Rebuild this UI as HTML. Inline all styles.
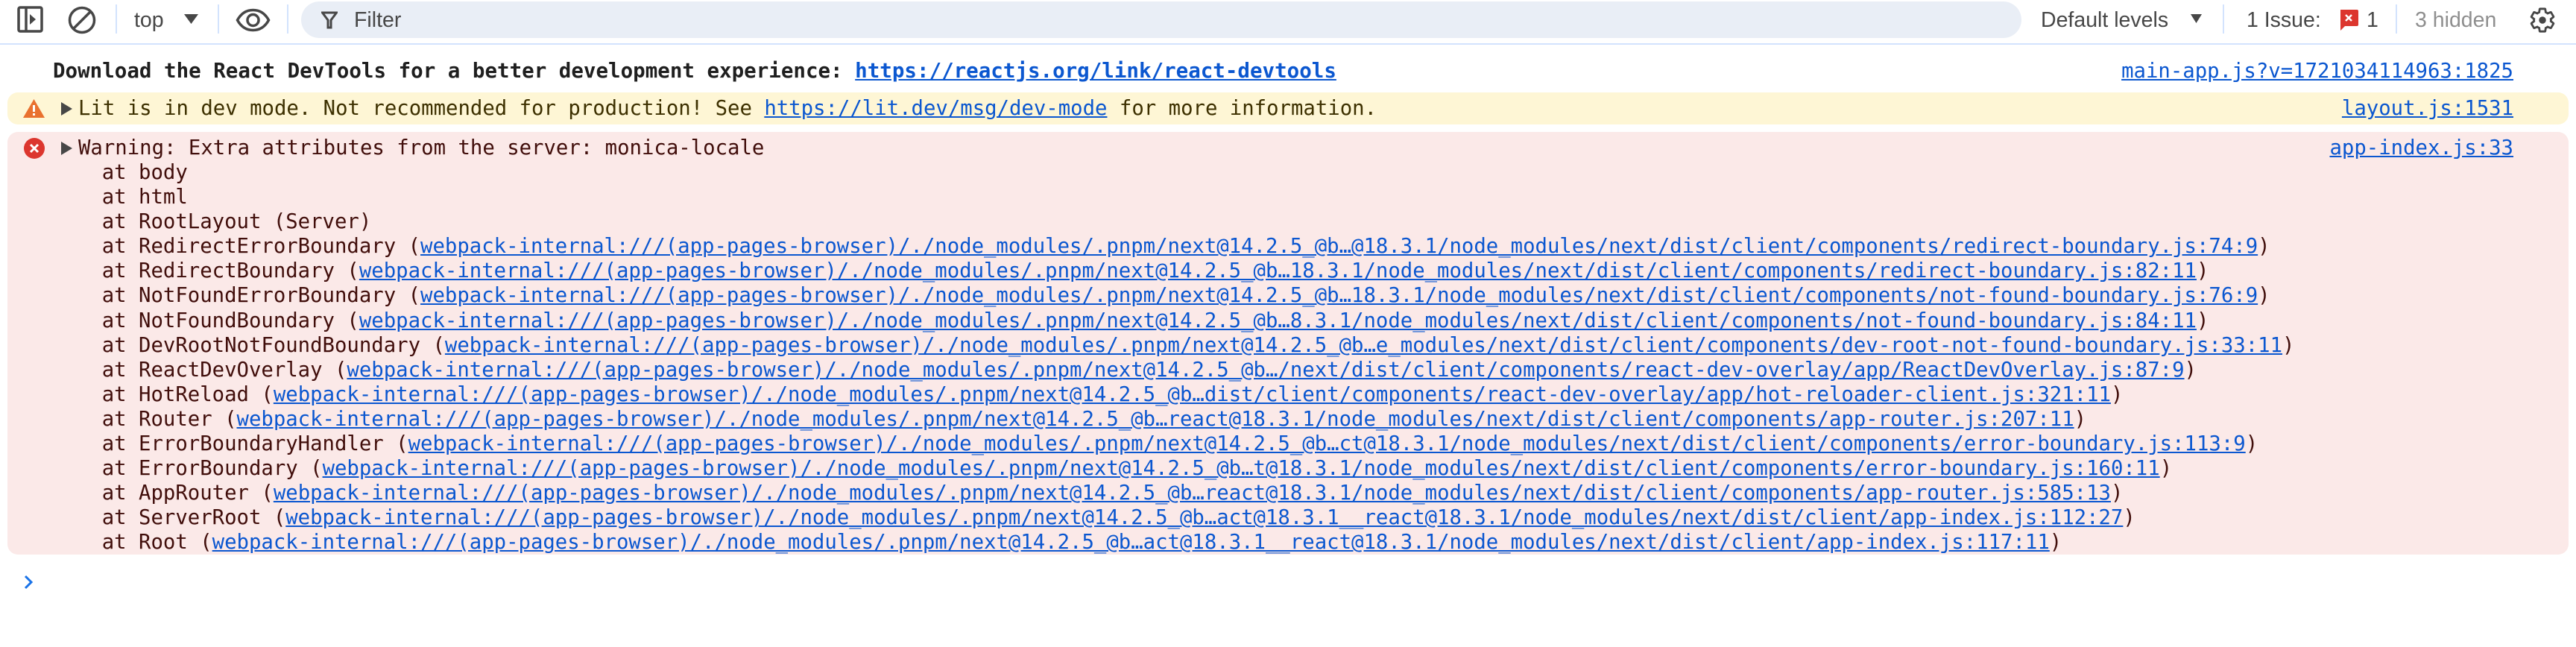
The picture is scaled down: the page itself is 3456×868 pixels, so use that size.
<!DOCTYPE html>
<html><head><meta charset="utf-8"><style>
*{margin:0;padding:0;box-sizing:border-box}
body{width:3456px;height:868px;background:#fff;position:relative;overflow:hidden;font-family:"Liberation Sans",sans-serif}
.tb{position:absolute;left:0;top:0;width:3456px;height:60px;border-bottom:2px solid #d3e3fd}
.sep{position:absolute;top:6px;width:2px;height:39px;background:#d3e3fd}
.t{position:absolute;font-size:28.5px;color:#474747;top:11px;line-height:32px}
.mono{font-family:"DejaVu Sans Mono","Liberation Mono",monospace;font-size:27.3px;line-height:33px;white-space:pre;position:absolute}
a{color:#0b57d0;text-decoration:underline}
.band{position:absolute;left:10px;width:3436px;border-radius:14px}
.err{color:#410e0b}
.ln{left:71px}
</style></head><body>
<div class="tb">
<svg style="position:absolute;left:23px;top:8px" width="35" height="36" viewBox="0 0 35 36"><rect x="2" y="2" width="31" height="32" rx="2" fill="none" stroke="#474747" stroke-width="3.5"/><line x1="12" y1="2" x2="12" y2="34" stroke="#474747" stroke-width="3.5"/><path d="M17 11 L25 18 L17 25Z" fill="#474747"/></svg>
<svg style="position:absolute;left:91px;top:8px" width="38" height="38" viewBox="0 0 38 38"><circle cx="19" cy="19" r="16.5" fill="none" stroke="#474747" stroke-width="3.5"/><line x1="8" y1="30" x2="30" y2="8" stroke="#474747" stroke-width="3.5"/></svg>
<div class="sep" style="left:155px"></div>
<div class="t" style="left:180px">top</div>
<svg style="position:absolute;left:247px;top:19px" width="19" height="13"><path d="M0 0H19L9.5 13Z" fill="#474747"/></svg>
<div class="sep" style="left:292px"></div>
<svg style="position:absolute;left:316px;top:11px" width="47" height="32" viewBox="0 0 47 32"><path d="M2.5 16C8 6 15 2.5 23.5 2.5S39 6 44.5 16C39 26 32 29.5 23.5 29.5S8 26 2.5 16Z" fill="none" stroke="#474747" stroke-width="3.5"/><circle cx="23.5" cy="16" r="7.5" fill="none" stroke="#474747" stroke-width="3.5"/></svg>
<div class="sep" style="left:385px"></div>
<div style="position:absolute;left:404px;top:2px;width:2308px;height:49px;border-radius:25px;background:#e9eef6"></div>
<svg style="position:absolute;left:431px;top:15px" width="22" height="24" viewBox="0 0 22 24"><path d="M1.5 2H20.5L13 12V22H9V12Z" fill="none" stroke="#474747" stroke-width="3"/></svg>
<div class="t" style="left:475px;color:#474747">Filter</div>
<div class="t" style="left:2738px">Default levels</div>
<svg style="position:absolute;left:2939px;top:19px" width="15" height="12"><path d="M0 0H15L7.5 12Z" fill="#474747"/></svg>
<div class="sep" style="left:2982px"></div>
<div class="t" style="left:3014px">1 Issue:</div>
<svg style="position:absolute;left:3138px;top:13px" width="26" height="28" viewBox="0 0 26 28"><path d="M2 0H24a2 2 0 0 1 2 2V20a2 2 0 0 1-2 2H8L2 28Z" fill="#dc362e"/><path d="M9 7L17 15M17 7L9 15" stroke="#fff" stroke-width="2.5"/></svg>
<div class="t" style="left:3175px">1</div>
<div class="sep" style="left:3214px"></div>
<div class="t" style="left:3240px;color:#8f8f8f">3 hidden</div>
<svg style="position:absolute;left:3392px;top:8px" width="38" height="38" viewBox="0 0 24 24"><path d="M19.14 12.94c.04-.3.06-.61.06-.94 0-.32-.02-.64-.07-.94l2.03-1.58a.49.49 0 0 0 .12-.61l-1.92-3.32a.488.488 0 0 0-.59-.22l-2.39.96c-.5-.38-1.030-.7-1.62-.94l-.36-2.54a.484.484 0 0 0-.48-.41h-3.840c-.24 0-.43.17-.47.41l-.36 2.54c-.59.24-1.13.57-1.62.94l-2.39-.96c-.22-.08-.47 0-.59.22L2.74 8.87c-.12.21-.08.47.12.61l2.03 1.58c-.05.3-.09.63-.09.94s.02.64.07.94l-2.03 1.58a.49.49 0 0 0-.12.61l1.920 3.32c.12.22.37.29.59.22l2.39-.96c.5.38 1.03.7 1.62.94l.36 2.54c.05.24.24.41.48.41h3.84c.24 0 .44-.17.47-.41l.36-2.54c.59-.24 1.13-.56 1.62-.94l2.39.96c.22.08.47 0 .59-.22l1.92-3.32c.12-.22.07-.47-.12-.61l-2.01-1.58z" fill="none" stroke="#474747" stroke-width="1.8"/><circle cx="12" cy="12" r="3" fill="#474747"/></svg>
</div>

<div class="mono ln" style="top:79px;font-weight:bold;color:#1f1f1f;font-size:27.5px">Download the React DevTools for a better development experience: <a>https://reactjs.org/link/react-devtools</a></div>
<div class="mono" style="top:79px;right:84px"><a>main-app.js?v=1721034114963:1825</a></div>

<div class="band" style="top:124px;height:43px;background:#fef6d5"></div>
<svg style="position:absolute;left:30px;top:132px" width="31" height="27" viewBox="0 0 31 27"><path d="M15.5 1L30 26H1Z" fill="#e9712f"/><rect x="14" y="9" width="3" height="9" fill="#fff"/><rect x="14" y="20" width="3" height="3" fill="#fff"/></svg>
<svg style="position:absolute;left:82px;top:137px" width="15" height="18"><path d="M0 0L15 9L0 18Z" fill="#474747"/></svg>
<div class="mono" style="top:129px;left:105px;color:#3d3000">Lit is in dev mode. Not recommended for production! See <a>https://lit.dev/msg/dev-mode</a> for more information.</div>
<div class="mono" style="top:129px;right:84px"><a>layout.js:1531</a></div>

<div class="band" style="top:177px;height:567px;background:#fbe9e8"></div>
<svg style="position:absolute;left:32px;top:185px" width="28" height="28" viewBox="0 0 28 28"><circle cx="14" cy="14" r="14" fill="#dc362e"/><path d="M9 9L19 19M19 9L9 19" stroke="#fff" stroke-width="3"/></svg>
<svg style="position:absolute;left:82px;top:190px" width="15" height="18"><path d="M0 0L15 9L0 18Z" fill="#474747"/></svg>
<div class="mono err" style="top:182px;left:105px">Warning: Extra attributes from the server: monica-locale</div>
<div class="mono" style="top:182px;right:84px"><a>app-index.js:33</a></div>
<div class="mono err ln" style="top:215px;line-height:33.1px">    at body
    at html
    at RootLayout (Server)
    at RedirectErrorBoundary (<a>webpack-internal:///(app-pages-browser)/./node_modules/.pnpm/next@14.2.5_@b…@18.3.1/node_modules/next/dist/client/components/redirect-boundary.js:74:9</a>)
    at RedirectBoundary (<a>webpack-internal:///(app-pages-browser)/./node_modules/.pnpm/next@14.2.5_@b…18.3.1/node_modules/next/dist/client/components/redirect-boundary.js:82:11</a>)
    at NotFoundErrorBoundary (<a>webpack-internal:///(app-pages-browser)/./node_modules/.pnpm/next@14.2.5_@b…18.3.1/node_modules/next/dist/client/components/not-found-boundary.js:76:9</a>)
    at NotFoundBoundary (<a>webpack-internal:///(app-pages-browser)/./node_modules/.pnpm/next@14.2.5_@b…8.3.1/node_modules/next/dist/client/components/not-found-boundary.js:84:11</a>)
    at DevRootNotFoundBoundary (<a>webpack-internal:///(app-pages-browser)/./node_modules/.pnpm/next@14.2.5_@b…e_modules/next/dist/client/components/dev-root-not-found-boundary.js:33:11</a>)
    at ReactDevOverlay (<a>webpack-internal:///(app-pages-browser)/./node_modules/.pnpm/next@14.2.5_@b…/next/dist/client/components/react-dev-overlay/app/ReactDevOverlay.js:87:9</a>)
    at HotReload (<a>webpack-internal:///(app-pages-browser)/./node_modules/.pnpm/next@14.2.5_@b…dist/client/components/react-dev-overlay/app/hot-reloader-client.js:321:11</a>)
    at Router (<a>webpack-internal:///(app-pages-browser)/./node_modules/.pnpm/next@14.2.5_@b…react@18.3.1/node_modules/next/dist/client/components/app-router.js:207:11</a>)
    at ErrorBoundaryHandler (<a>webpack-internal:///(app-pages-browser)/./node_modules/.pnpm/next@14.2.5_@b…ct@18.3.1/node_modules/next/dist/client/components/error-boundary.js:113:9</a>)
    at ErrorBoundary (<a>webpack-internal:///(app-pages-browser)/./node_modules/.pnpm/next@14.2.5_@b…t@18.3.1/node_modules/next/dist/client/components/error-boundary.js:160:11</a>)
    at AppRouter (<a>webpack-internal:///(app-pages-browser)/./node_modules/.pnpm/next@14.2.5_@b…react@18.3.1/node_modules/next/dist/client/components/app-router.js:585:13</a>)
    at ServerRoot (<a>webpack-internal:///(app-pages-browser)/./node_modules/.pnpm/next@14.2.5_@b…act@18.3.1__react@18.3.1/node_modules/next/dist/client/app-index.js:112:27</a>)
    at Root (<a>webpack-internal:///(app-pages-browser)/./node_modules/.pnpm/next@14.2.5_@b…act@18.3.1__react@18.3.1/node_modules/next/dist/client/app-index.js:117:11</a>)</div>

<svg style="position:absolute;left:31px;top:771px" width="14" height="20" viewBox="0 0 14 20"><path d="M3 2L11 10L3 18" fill="none" stroke="#1a73e8" stroke-width="3"/></svg>
</body></html>
